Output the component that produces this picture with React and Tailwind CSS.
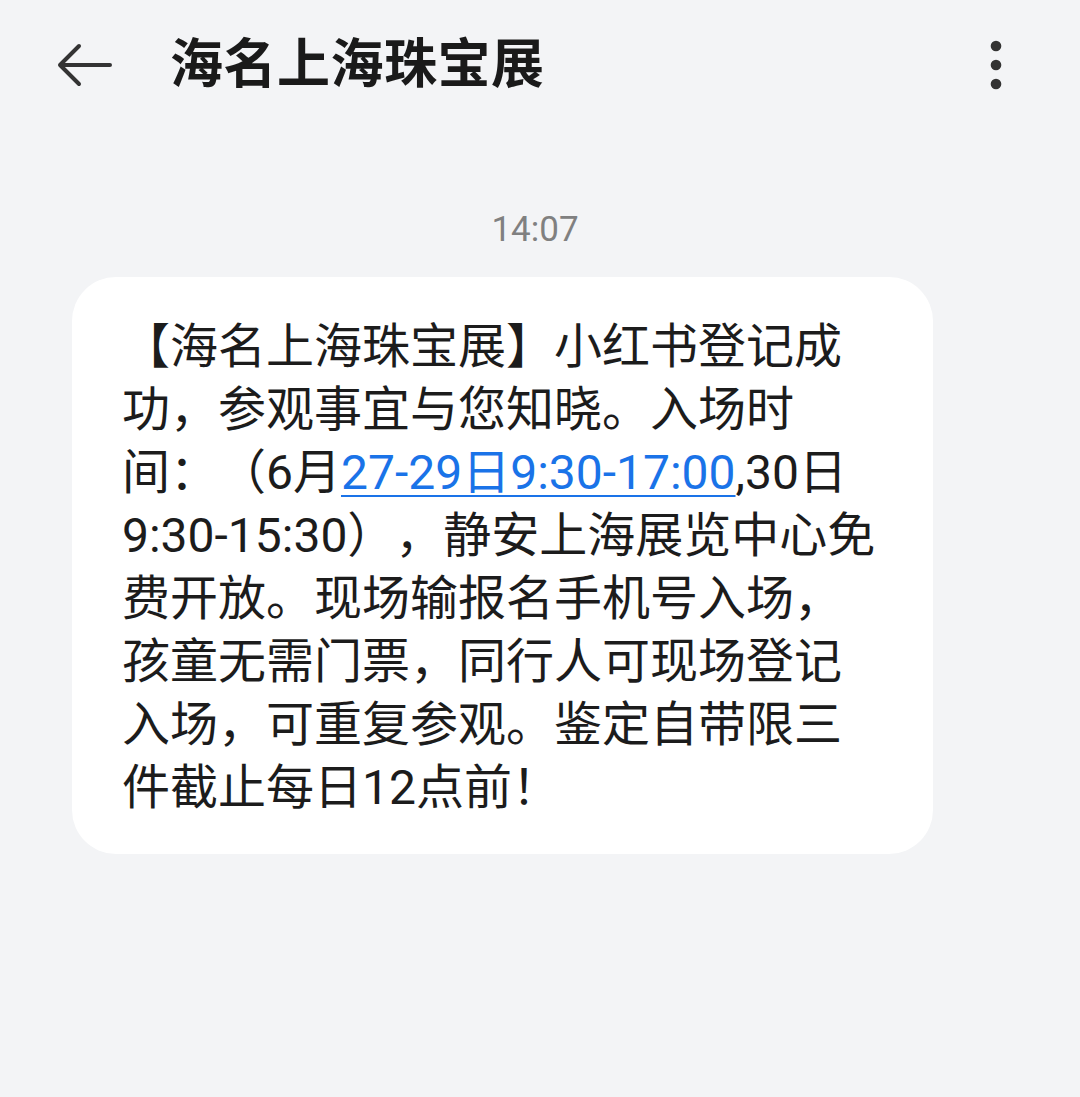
const lines = [
    "【海名上海珠宝展】小红书登记成",
    "功，参观事宜与您知晓。入场时",
    null,
    "9:30-15:30），静安上海展览中心免",
    "费开放。现场输报名手机号入场，",
    "孩童无需门票，同行人可现场登记",
    "入场，可重复参观。鉴定自带限三",
    "件截止每日12点前！",
];

const BackArrow = () => (
    <svg width="56" height="44" viewBox="0 0 56 44" fill="none" stroke="#333333" strokeWidth="4" strokeLinecap="round" strokeLinejoin="round">
        <path d="M54 22H4M23 3L4 22l19 19" />
    </svg>
);

const MoreDots = () => (
    <svg width="12" height="50" viewBox="0 0 12 50" fill="#333333">
        <circle cx="6" cy="6" r="5.3" />
        <circle cx="6" cy="25" r="5.3" />
        <circle cx="6" cy="44" r="5.3" />
    </svg>
);

export default function App() {
    return (
        <div className="w-[1080px] h-[1097px] bg-[#f3f4f6] overflow-hidden font-['Roboto','Noto_Sans_CJK_SC',sans-serif] [text-spacing-trim:space-all]">
            {/* header */}
            <div className="h-[130px] flex items-center pl-[56px] pr-[78px]">
                <BackArrow />
                <div className="ml-[58px] text-[53px] font-bold text-[#1a1a1a] leading-none tracking-[0.5px]">海名上海珠宝展</div>
                <div className="ml-auto">
                    <MoreDots />
                </div>
            </div>

            {/* timestamp */}
            <div className="mt-[80px] text-center text-[35px] leading-[40px] text-[#808080] pr-[10px]">14:07</div>

            {/* message bubble */}
            <div className="mt-[27px] ml-[72px] w-[861px] bg-white rounded-[44px] pt-[38px] pb-[35px] pl-[50px]">
                {lines.map((line, i) =>
                    line === null ? (
                        <div key={i} className="text-[48px] leading-[63px] text-[#1c1c1c] whitespace-nowrap">
                            间：（6月
                            <span className="text-[#1a73e8] underline decoration-2 underline-offset-[6px]">27-29日9:30-17:00</span>
                            ,30日
                        </div>
                    ) : (
                        <div key={i} className="text-[48px] leading-[63px] text-[#1c1c1c] whitespace-nowrap">
                            {line}
                        </div>
                    )
                )}
            </div>
        </div>
    );
}
